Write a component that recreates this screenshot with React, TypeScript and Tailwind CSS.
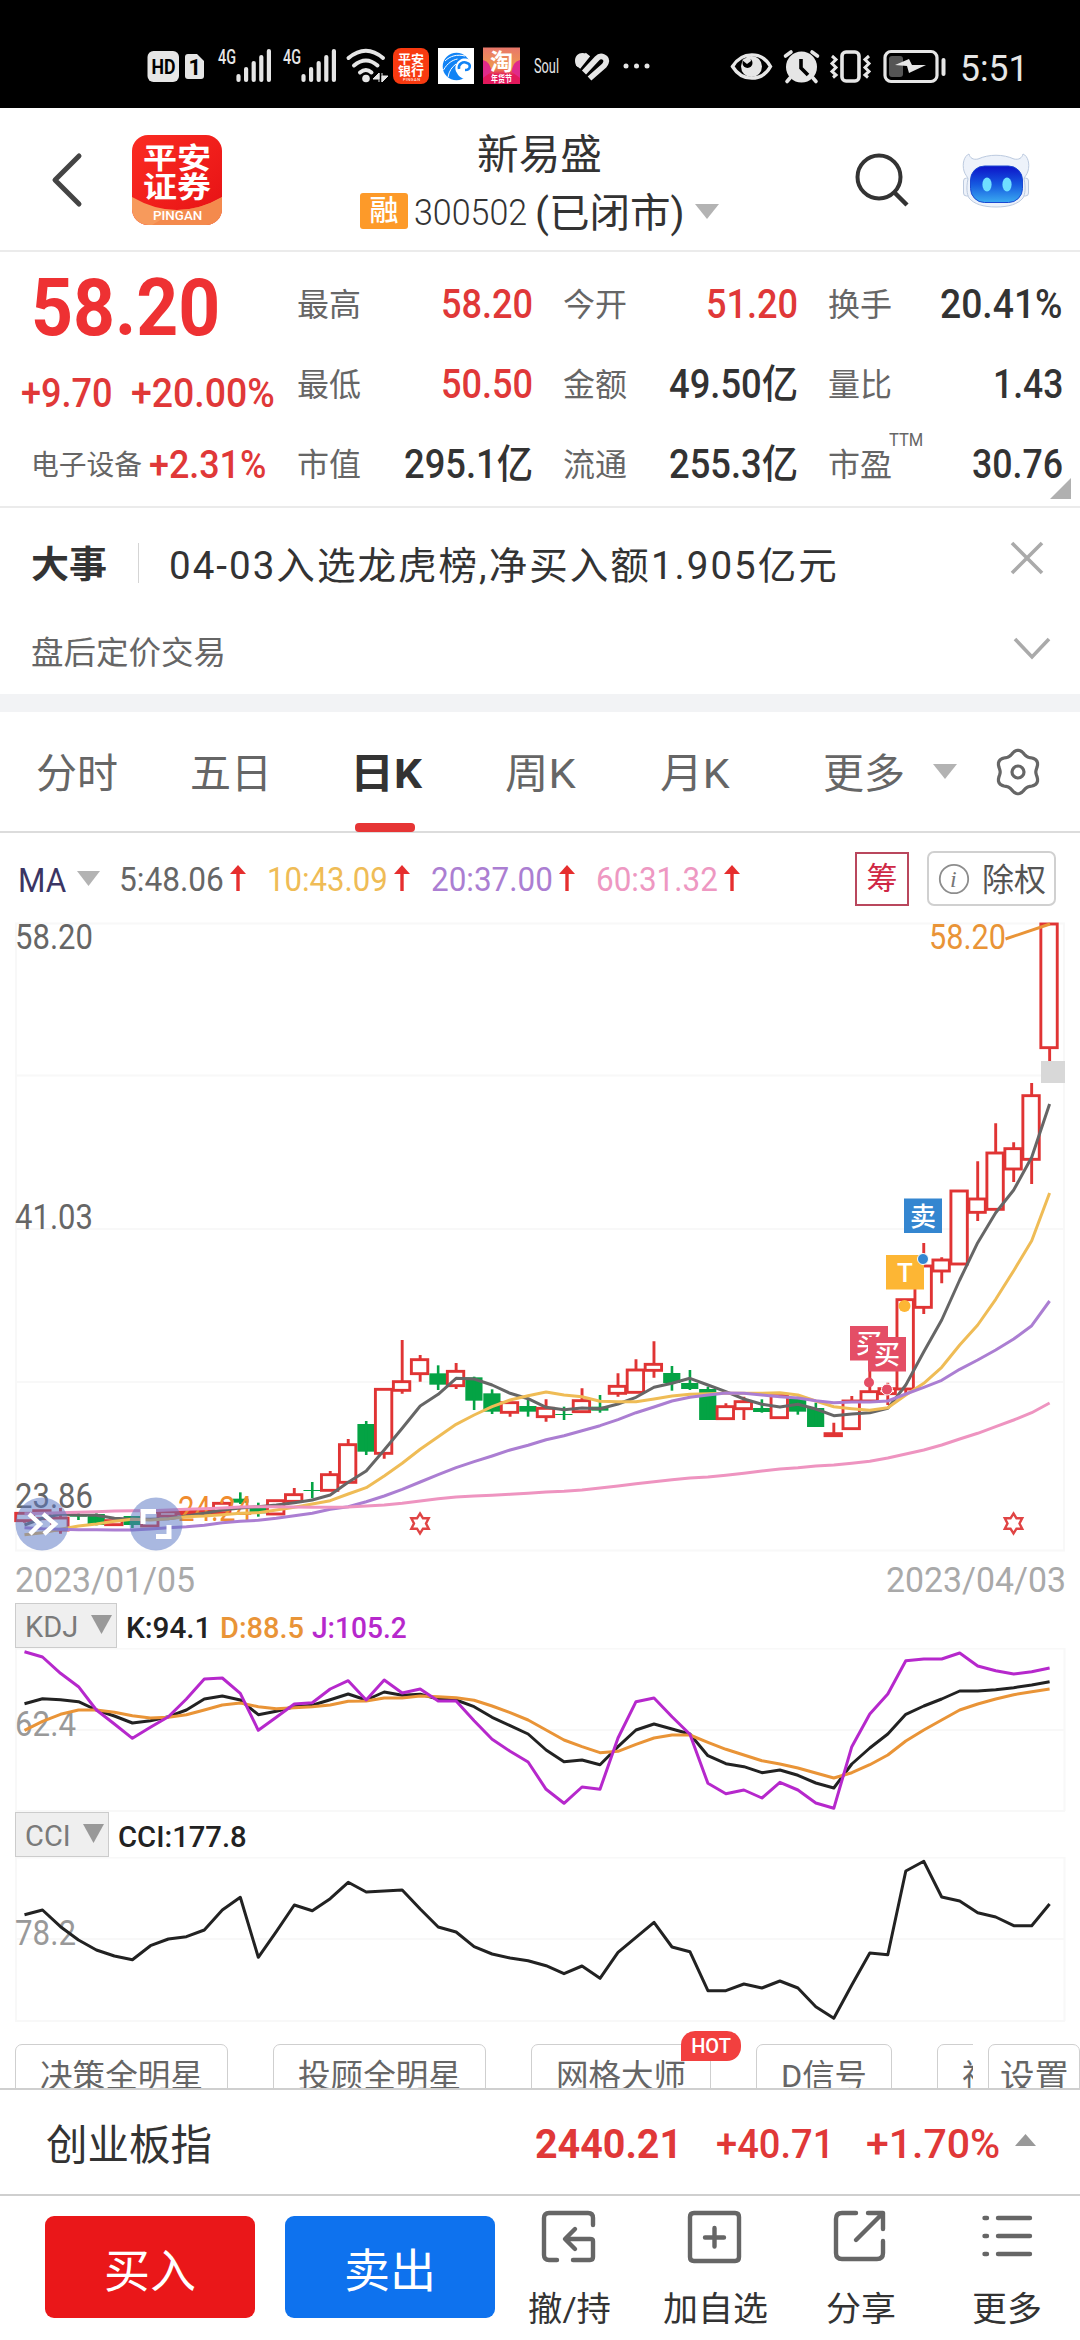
import { useLayoutEffect, useRef, useState, type ReactNode } from "react";

/** Single line of text condensed or stretched to the width of its box. */
function Fit({ className, children }: { className: string; children: ReactNode }) {
  const box = useRef<HTMLSpanElement>(null);
  const text = useRef<HTMLSpanElement>(null);
  const [scale, setScale] = useState(1);
  useLayoutEffect(() => {
    if (box.current && text.current && text.current.offsetWidth > 0) {
      setScale(box.current.offsetWidth / text.current.offsetWidth);
    }
  }, [children]);
  return (
    <span ref={box} className={`block shrink-0 leading-none whitespace-nowrap ${className}`}>
      <span ref={text} className="inline-block origin-left" style={{ transform: `scaleX(${scale})` }}>
        {children}
      </span>
    </span>
  );
}

function Down({ className }: { className: string }) {
  return (
    <svg viewBox="0 0 24 16" preserveAspectRatio="none" className={`shrink-0 ${className}`}>
      <path d="M0 0H24L12 16Z" fill="currentColor" />
    </svg>
  );
}

function Signal() {
  const tops = [75, 68, 62, 56, 50];
  return (
    <svg width="65" height="108" viewBox="215 0 65 108" className="shrink-0">
      <text x="218" y="64" fontSize="20" fontWeight="500" textLength="18" lengthAdjust="spacingAndGlyphs" fill="#e6e6e6">
        4G
      </text>
      {tops.map((t, i) => (
        <path key={t} d={`M${238.5 + i * 7.6} ${t + 1}V80`} stroke="#e6e6e6" strokeWidth="4.2" strokeLinecap="round" />
      ))}
    </svg>
  );
}

function StatusBar() {
  return (
    <div className="flex h-[108px] bg-black">
      <svg width="75" height="108" viewBox="140 0 75 108" className="ml-[140px] shrink-0">
        <rect x="147.5" y="51" width="31.5" height="31" rx="6" fill="#e6e6e6" />
        <text x="151.5" y="73.500" fontSize="20" fontWeight="700" textLength="24" lengthAdjust="spacingAndGlyphs">HD</text>
        <path d="M188 54h9l7 7v15a3 3 0 0 1-3 3h-13a3 3 0 0 1-3-3v-19a3 3 0 0 1 3-3z" fill="#e6e6e6" />
        <text x="188.500" y="75" fontSize="22" fontWeight="700">1</text>
      </svg>
      <Signal />
      <Signal />
      <svg width="46" height="108" viewBox="345 0 46 108" className="shrink-0">
        <g fill="none" stroke="#e6e6e6" strokeWidth="4" strokeLinecap="round">
          <path d="M348.500 58Q366 43.500 383 58" />
          <path d="M354 65.500Q366 55.500 377.500 65.500" />
          <path d="M360 72.500Q366 67.500 371.500 72.500" />
        </g>
        <circle cx="366" cy="78.500" r="3.800" fill="#e6e6e6" />
        <path d="M379 73v9M373 79l6-6v6zM382 82v-9M388 76h-6v6z" fill="#e6e6e6" stroke="#e6e6e6" strokeWidth="1" />
      </svg>
      <svg width="43" height="108" viewBox="391 0 43 108" className="shrink-0">
        <rect x="393" y="48" width="36" height="36" rx="8" fill="#f83a10" />
        <g fill="#fff" fontWeight="700" fontSize="12.500">
          <text x="398" y="63.500" textLength="26" lengthAdjust="spacingAndGlyphs">平安</text>
          <text x="398" y="75.500" textLength="26" lengthAdjust="spacingAndGlyphs">银行</text>
          <text x="403" y="81" fontSize="4" fontWeight="400" textLength="17">PINGAN</text>
        </g>
      </svg>
      <svg width="45" height="108" viewBox="434 0 45 108" className="shrink-0">
        <rect x="438" y="48" width="36" height="36" fill="#fff" />
        <circle cx="456.500" cy="66.500" r="13.800" fill="#1183f5" />
        <path d="M473 64c-2-5-9-7-13-4-5 3-6 9-3 13 2 4 6 6 9 6l7-6z" fill="#fff" />
        <path d="M459 69c-1-5 4-8 8-6 4 1 4 7-2 7" fill="none" stroke="#1183f5" strokeWidth="2.600" />
        <path d="M445 61c5-5 12-7 20-5M443.500 70c4-7 9-10 14-11M448 77c1-6 4-10 8-13" fill="none" stroke="#fff" strokeWidth="1" />
      </svg>
      <svg width="46" height="108" viewBox="479 0 46 108" className="shrink-0">
        <defs>
          <linearGradient id="tao" x1="0" y1="0" x2="0" y2="1">
            <stop offset="0" stopColor="#e9776b" />
            <stop offset=".55" stopColor="#ee9a4d" />
            <stop offset=".75" stopColor="#e3185c" />
          </linearGradient>
        </defs>
        <rect x="483" y="47.500" width="37" height="36.500" fill="url(#tao)" />
        <path d="M483 60q8 2 8 12l-8 6zM520 60q-8 2-8 12l8 6z" fill="#e02a8a" />
        <text x="490" y="69.500" fontSize="23" fontWeight="700" fill="#fff">淘</text>
        <text x="491" y="82" fontSize="9" fontWeight="700" fill="#fff" textLength="21" lengthAdjust="spacingAndGlyphs">年货节</text>
      </svg>
      <svg width="45" height="108" viewBox="525 0 45 108" className="shrink-0">
        <text x="534" y="73" fontSize="19.500" textLength="25" lengthAdjust="spacingAndGlyphs" fill="#e6e6e6">Soul</text>
      </svg>
      <svg width="45" height="108" viewBox="570 0 45 108" className="shrink-0">
        <g fill="none" stroke="#e6e6e6" strokeWidth="5.600">
          <path d="M578 67L588 54.500M584 72.500L597 58.500c4-4.500 10.500-1 9 4-.4 1.500-1 2.200-2 3.300L589.500 78.500" />
        </g>
        <path d="M575 61c0-7 6-9.500 11.500-7l-9 13c-1.500-1.500-2.500-3.500-2.500-6z" fill="#e6e6e6" />
      </svg>
      <svg width="45" height="108" viewBox="615 0 45 108" className="shrink-0">
        {[626, 636.5, 647].map((x) => (
          <circle key={x} cx={x} cy="66" r="2.500" fill="#e6e6e6" />
        ))}
      </svg>
      <svg width="52" height="108" viewBox="727 0 52 108" className="ml-[67px] shrink-0">
        <path d="M732.500 66.500C742 51 762 51 770.500 66.500C762 82 742 82 732.500 66.500Z" fill="none" stroke="#e6e6e6" strokeWidth="3.400" />
        <circle cx="751.500" cy="66.500" r="10.500" fill="#e6e6e6" />
        <circle cx="747.500" cy="63" r="5" fill="#000" />
        <path d="M742 60l8-4 1 5-4 3z" fill="#e6e6e6" />
      </svg>
      <svg width="46" height="108" viewBox="779 0 46 108" className="shrink-0">
        <circle cx="801.500" cy="67" r="15.500" fill="#e6e6e6" />
        <path d="M801 59v9l7 7" fill="none" stroke="#000" strokeWidth="3.600" />
        <path d="M785.500 56l5.500-4M817.500 56l-5.500-4M790 78l-3 3.500M813 78l3 3.500" stroke="#e6e6e6" strokeWidth="3.600" strokeLinecap="round" />
      </svg>
      <svg width="51" height="108" viewBox="825 0 51 108" className="shrink-0">
        <rect x="842" y="52" width="17" height="29" rx="4" fill="none" stroke="#e6e6e6" strokeWidth="3.600" />
        <path d="M832 56l4 3.500-4 4 4 4-4 4 4 3.500-3 2.500M869 56l-4 3.500 4 4-4 4 4 4-4 3.500 3 2.500" fill="none" stroke="#e6e6e6" strokeWidth="3" />
      </svg>
      <svg width="76" height="108" viewBox="876 0 76 108" className="shrink-0">
        <rect x="885" y="51.500" width="52" height="30" rx="6" fill="none" stroke="#e6e6e6" strokeWidth="3.200" />
        <rect x="889" y="56" width="14" height="21" rx="3" fill="#555" />
        <path d="M895 65l14-6 3 6h14l-17 8-2-7z" fill="#e6e6e6" />
        <path d="M943.500 60v14" stroke="#e6e6e6" strokeWidth="4" strokeLinecap="round" />
      </svg>
      <Fit className="mt-[50px] ml-[8px] w-[68px] text-[37px] text-[#e6e6e6]">5:51</Fit>
    </div>
  );
}

function Header() {
  return (
    <header className="flex h-[144px] border-b-2 border-[#ebebeb] bg-white">
      <svg width="36" height="60" viewBox="0 0 36 60" className="mt-[42px] ml-[49px] shrink-0">
        <path d="M30 6L6 30l24 24" fill="none" stroke="#444" strokeWidth="5" strokeLinecap="round" strokeLinejoin="round" />
      </svg>
      <div className="relative mt-[27px] ml-[47px] flex h-[90px] w-[90px] shrink-0 flex-col items-center overflow-hidden rounded-[16px] bg-gradient-to-br from-[#fb2b22] to-[#e60e14] font-bold text-white">
        <svg viewBox="0 0 90 90" className="absolute inset-0">
          <path d="M0 62Q45 88 90 62V90H0Z" fill="#f79a5c" />
          <path d="M45 75Q72 74 90 62V90H20Z" fill="#f27d41" opacity=".55" />
        </svg>
        <Fit className="relative mt-[10px] w-[68px] text-[29px]">平安</Fit>
        <Fit className="relative w-[68px] text-[29px]">证券</Fit>
        <Fit className="relative mt-[7px] w-[49px] text-[12px] font-medium">PINGAN</Fit>
      </div>
      <div className="ml-[138px] flex w-[360px] shrink-0 flex-col">
        <Fit className="mt-[27px] ml-[117px] w-[125px] text-[41px] text-[#333]">新易盛</Fit>
        <div className="mt-[14px] flex h-[42px] items-center">
          <span className="flex h-[36px] w-[48px] items-center justify-center rounded-[3px] bg-[#fd9a29] text-[29px] leading-none font-medium text-white">融</span>
          <Fit className="mt-[2px] ml-[6px] w-[113px] text-[37px] font-light text-[#333]">300502</Fit>
          <Fit className="mt-[5px] ml-[8px] w-[150px] text-[40px] text-[#333]">(已闭市)</Fit>
          <Down className="ml-[10px] h-[15px] w-[24px] text-[#b3b3b3]" />
        </div>
      </div>
      <svg width="60" height="60" viewBox="850 148 60 60" className="mt-[40px] ml-[130px] shrink-0">
        <circle cx="879" cy="177" r="21.500" fill="none" stroke="#333" strokeWidth="4" />
        <path d="M895 193l12 12" stroke="#333" strokeWidth="4.500" />
      </svg>
      <svg width="70" height="60" viewBox="960 150 70 60" className="mt-[42px] ml-[51px] shrink-0">
        <defs>
          <linearGradient id="visor" x1="0" y1="0" x2="0" y2="1">
            <stop offset="0" stopColor="#0d12c8" />
            <stop offset=".5" stopColor="#1558e0" />
            <stop offset="1" stopColor="#3aaaf0" />
          </linearGradient>
        </defs>
        <g fill="#edf2fa" stroke="#bccadf" strokeWidth="1">
          <rect x="962.500" y="178" width="10" height="18" rx="3" />
          <rect x="1017.500" y="178" width="10" height="18" rx="3" />
          <path d="M968 154c-5 2-7 10-5 17 1 4 4 6 4 8-2 9-1 15 1 19 5 6 14 9 27 9s22-3 27-9c2-4 3-10 1-19 0-2 3-4 4-8 2-7 0-15-5-17-1 4-4 6-9 5-11-5-25-5-36 0-5 1-8-1-9-5z" />
        </g>
        <rect x="969.500" y="166" width="52" height="36.500" rx="14" fill="url(#visor)" stroke="#1a49d2" />
        <ellipse cx="986" cy="184.500" rx="4.600" ry="7" fill="#6fe0ff" />
        <ellipse cx="1006" cy="184.500" rx="4.600" ry="7" fill="#6fe0ff" />
      </svg>
    </header>
  );
}

const RED = "text-[#e03838]";
const INK = "text-[#333]";

function Stat({ label, value, width, tone, sup }: { label: string; value: string; width: string; tone: string; sup?: string }) {
  return (
    <div className="relative flex h-[80px] items-center justify-between">
      <Fit className="w-[64px] text-[32px] text-[#666]">{label}</Fit>
      {sup && <Fit className="absolute top-[6px] left-[61px] w-[34px] text-[18px] text-[#666]">{sup}</Fit>}
      <Fit className={`${width} ${tone} text-[40px] font-medium`}>{value}</Fit>
    </div>
  );
}

function Quote() {
  return (
    <section className="relative flex h-[256px] border-b-2 border-[#ebebeb] bg-white">
      <div className="w-[297px] shrink-0">
        <Fit className="mt-[17px] ml-[31px] w-[189px] text-[79px] font-bold text-[#ee3133]">58.20</Fit>
        <div className={`mt-[26px] flex ${RED}`}>
          <Fit className="ml-[21px] w-[92px] text-[40px] font-medium">+9.70</Fit>
          <Fit className="ml-[18px] w-[144px] text-[40px] font-medium">+20.00%</Fit>
        </div>
        <div className="mt-[32px] flex items-center">
          <Fit className="mt-[2px] ml-[31px] w-[111px] text-[28px] text-[#666]">电子设备</Fit>
          <Fit className={`ml-[7px] w-[117px] text-[38px] font-medium ${RED}`}>+2.31%</Fit>
        </div>
      </div>
      <div className="grid h-[240px] w-[767px] shrink-0 grid-cols-[236px_235px_235px] gap-x-[30px] pt-[13px]">
        <Stat label="最高" value="58.20" width="w-[92px]" tone={RED} />
        <Stat label="今开" value="51.20" width="w-[92px]" tone={RED} />
        <Stat label="换手" value="20.41%" width="w-[123px]" tone={INK} />
        <Stat label="最低" value="50.50" width="w-[92px]" tone={RED} />
        <Stat label="金额" value="49.50亿" width="w-[129px]" tone={INK} />
        <Stat label="量比" value="1.43" width="w-[70px]" tone={INK} />
        <Stat label="市值" value="295.1亿" width="w-[129px]" tone={INK} />
        <Stat label="流通" value="255.3亿" width="w-[129px]" tone={INK} />
        <Stat label="市盈" value="30.76" width="w-[91px]" tone={INK} sup="TTM" />
      </div>
      <svg width="21" height="21" viewBox="0 0 21 21" className="absolute right-[9px] bottom-[7px]">
        <path d="M21 0V21H0Z" fill="#b0b0b0" />
      </svg>
    </section>
  );
}

function News() {
  return (
    <section className="h-[186px] bg-white">
      <div className="flex h-[110px] items-center">
        <Fit className="mt-[5px] ml-[31px] w-[76px] text-[37px] font-bold text-[#333]">大事</Fit>
        <span className="ml-[31px] h-[40px] w-px bg-[#d5d5d5]" />
        <Fit className="mt-[5px] ml-[30px] w-[670px] text-[38px] tracking-[2px] text-[#333]">04-03入选龙虎榜,净买入额1.905亿元</Fit>
        <svg width="36" height="36" viewBox="0 0 36 36" className="mb-[10px] ml-[170px]">
          <path d="M3 3L33 33M33 3L3 33" stroke="#aaa" strokeWidth="3.600" />
        </svg>
      </div>
      <div className="flex h-[70px] items-center">
        <Fit className="ml-[31px] w-[195px] text-[32px] text-[#666]">盘后定价交易</Fit>
        <svg width="40" height="26" viewBox="0 0 40 26" className="mb-[8px] ml-[786px]">
          <path d="M3 3L20 21L37 3" fill="none" stroke="#aaa" strokeWidth="3.600" />
        </svg>
      </div>
    </section>
  );
}

/** Six-lobed outline for the settings gear, point up. */
const gear = Array.from({ length: 72 }, (_, i) => {
  const a = (i * Math.PI) / 36;
  const r = 19.8 + 2 * Math.cos(6 * a);
  return `${(r * Math.sin(a)).toFixed(2)},${(-r * Math.cos(a)).toFixed(2)}`;
}).join(" ");

function Periods() {
  return (
    <nav className="relative flex h-[121px] items-center border-b-2 border-[#dcdcdc] bg-white text-[41px] text-[#666]">
      <Fit className="mt-[6px] ml-[36px] w-[82px]">分时</Fit>
      <Fit className="mt-[6px] ml-[72px] w-[82px]">五日</Fit>
      <Fit className="mt-[6px] ml-[78px] w-[72px] font-bold text-[#333]">日K</Fit>
      <Fit className="mt-[6px] ml-[83px] w-[71px]">周K</Fit>
      <Fit className="mt-[6px] ml-[84px] w-[70px]">月K</Fit>
      <Fit className="mt-[6px] ml-[93px] w-[82px]">更多</Fit>
      <Down className="ml-[28px] h-[15px] w-[24px] text-[#b3b3b3]" />
      <svg width="48" height="48" viewBox="-24 -24 48 48" className="ml-[37px] shrink-0">
        <polygon points={gear} fill="none" stroke="#666" strokeWidth="3.200" strokeLinejoin="round" />
        <circle r="6" fill="none" stroke="#666" strokeWidth="3.200" />
      </svg>
      <span className="absolute bottom-[-1px] left-[355px] h-[9px] w-[60px] rounded-[4px] bg-[#e63535]" />
    </nav>
  );
}

function Average({ text, color, width, gap }: { text: string; color: string; width: string; gap: string }) {
  return (
    <div className={`flex items-center ${gap}`}>
      <Fit className={`text-[34px] ${width} ${color}`}>{text}</Fit>
      <svg width="16" height="26" viewBox="0 0 16 26" className="mb-[2px] ml-[6px]">
        <path d="M8 26V6" stroke="#e62e2e" strokeWidth="3.400" />
        <path d="M0 9L8 0L16 9Z" fill="#e62e2e" />
      </svg>
    </div>
  );
}

function Averages() {
  return (
    <div className="flex h-[87px] items-center bg-white pt-[4px]">
      <Fit className="mt-[2px] ml-[18px] w-[48px] text-[34px] text-[#3b3564]">MA</Fit>
      <Down className="ml-[11px] h-[15px] w-[23px] text-[#b3b3b3]" />
      <Average text="5:48.06" color="text-[#666]" width="w-[105px]" gap="ml-[19px]" />
      <Average text="10:43.09" color="text-[#efbc56]" width="w-[121px]" gap="ml-[21px]" />
      <Average text="20:37.00" color="text-[#ab7ed2]" width="w-[122px]" gap="ml-[21px]" />
      <Average text="60:31.32" color="text-[#ee98c2]" width="w-[122px]" gap="ml-[21px]" />
      <div className="ml-[115px] flex h-[54px] w-[54px] items-center justify-center border-2 border-[#b9475d] text-[31px] leading-none text-[#cf2745]">筹</div>
      <div className="ml-[18px] flex h-[55px] w-[129px] items-center rounded-[7px] border-2 border-[#d0d0d0]">
        <svg width="32" height="32" viewBox="0 0 32 32" className="ml-[9px]">
          <circle cx="16" cy="16" r="14.200" fill="none" stroke="#8d8d8d" strokeWidth="1.800" />
          <text x="12" y="24" fontSize="24" fontStyle="italic" fontFamily="Liberation Serif, serif" fill="#777">i</text>
        </svg>
        <Fit className="mt-[2px] ml-[12px] w-[64px] text-[32px] text-[#555]">除权</Fit>
      </div>
    </div>
  );
}

/* Chart data is stored in thirds of a pixel. */
const xAt = (i: number) => 24.5 + 17.985 * i;
const line = (values: number[]) => values.map((v, i) => `${xAt(i).toFixed(1)},${(v / 3).toFixed(1)}`).join(" ");

type Candle = ["r" | "g", number, number, number, number];

/* colour, body top, body bottom, high, low */
const candles: Candle[] = [
  ["r", 1840, 1862, 1838, 1868], ["r", 1832, 1856, 1830, 1860], ["r", 1854, 1890, 1824, 1901], ["g", 1842, 1850, 1838, 1860],
  ["g", 1842, 1875, 1840, 1876], ["r", 1862, 1874, 1860, 1878], ["g", 1848, 1875, 1848, 1884], ["r", 1836, 1878, 1834, 1880],
  ["r", 1836, 1848, 1832, 1852], ["r", 1834, 1842, 1828, 1846], ["r", 1832, 1840, 1828, 1842], ["r", 1810, 1838, 1804, 1840],
  ["g", 1796, 1808, 1777, 1812], ["g", 1818, 1840, 1808, 1850], ["r", 1802, 1842, 1800, 1844], ["r", 1784, 1804, 1764, 1806],
  ["g", 1770, 1773, 1746, 1795], ["r", 1724, 1771, 1713, 1773], ["r", 1634, 1747, 1617, 1750], ["g", 1572, 1655, 1563, 1665],
  ["r", 1468, 1660, 1466, 1676], ["r", 1445, 1471, 1320, 1481], ["r", 1379, 1421, 1365, 1445], ["g", 1420, 1454, 1396, 1470],
  ["r", 1414, 1457, 1389, 1467], ["g", 1432, 1502, 1430, 1530], ["g", 1480, 1535, 1468, 1542], ["r", 1508, 1537, 1506, 1550],
  ["g", 1518, 1535, 1500, 1550], ["r", 1525, 1550, 1498, 1565], ["g", 1542, 1545, 1520, 1560], ["r", 1502, 1535, 1465, 1537],
  ["g", 1520, 1532, 1485, 1538], ["r", 1459, 1480, 1420, 1490], ["r", 1410, 1477, 1378, 1479], ["r", 1393, 1411, 1324, 1433],
  ["g", 1419, 1449, 1398, 1472], ["g", 1449, 1467, 1410, 1470], ["g", 1467, 1560, 1460, 1560], ["r", 1520, 1556, 1510, 1558],
  ["r", 1505, 1526, 1490, 1560], ["g", 1524, 1536, 1498, 1538], ["r", 1487, 1553, 1485, 1555], ["g", 1497, 1535, 1490, 1544],
  ["g", 1524, 1581, 1508, 1581], ["r", 1601, 1607, 1568, 1609], ["r", 1503, 1586, 1488, 1588], ["r", 1475, 1503, 1400, 1505],
  ["r", 1466, 1481, 1448, 1515], ["r", 1199, 1467, 1197, 1480], ["r", 1098, 1222, 1029, 1242], ["r", 1080, 1113, 1072, 1150],
  ["r", 873, 1092, 870, 1094], ["r", 897, 937, 784, 963], ["r", 759, 928, 670, 930], ["r", 746, 807, 727, 846],
  ["r", 587, 778, 549, 852], ["r", 72, 443, 70, 483],
];

const ma5 = [1875, 1855, 1842, 1845, 1846, 1855, 1858, 1858, 1856, 1848, 1840, 1830, 1824, 1820, 1815, 1808, 1800, 1785, 1747, 1713, 1650, 1585, 1518, 1483, 1435, 1437, 1455, 1480, 1496, 1522, 1529, 1524, 1526, 1512, 1492, 1462, 1450, 1435, 1455, 1475, 1497, 1513, 1521, 1513, 1527, 1547, 1542, 1538, 1525, 1455, 1355, 1260, 1140, 1028, 938, 870, 772, 612];
const ma10 = [1904, 1898, 1888, 1878, 1872, 1864, 1858, 1860, 1856, 1850, 1848, 1844, 1840, 1838, 1830, 1822, 1812, 1802, 1782, 1763, 1728, 1690, 1648, 1610, 1573, 1545, 1520, 1500, 1487, 1476, 1485, 1490, 1504, 1505, 1505, 1497, 1488, 1483, 1481, 1480, 1480, 1480, 1478, 1485, 1503, 1520, 1526, 1531, 1523, 1485, 1450, 1402, 1335, 1275, 1198, 1112, 1022, 879];
const ma20 = [1883, 1886, 1888, 1889, 1889, 1890, 1890, 1887, 1883, 1880, 1876, 1868, 1864, 1861, 1855, 1847, 1840, 1828, 1820, 1805, 1788, 1768, 1746, 1724, 1703, 1685, 1668, 1650, 1636, 1619, 1607, 1592, 1577, 1559, 1538, 1521, 1503, 1492, 1485, 1479, 1480, 1485, 1490, 1494, 1502, 1508, 1506, 1506, 1503, 1482, 1462, 1441, 1408, 1380, 1350, 1317, 1277, 1203];
const ma60 = [1841, 1840, 1838, 1837, 1835, 1833, 1832, 1832, 1830, 1828, 1826, 1824, 1821, 1820, 1820, 1821, 1822, 1822, 1821, 1818, 1815, 1810, 1803, 1796, 1791, 1788, 1786, 1783, 1780, 1776, 1774, 1770, 1764, 1758, 1751, 1745, 1739, 1734, 1731, 1726, 1720, 1713, 1707, 1703, 1698, 1695, 1690, 1684, 1674, 1662, 1650, 1635, 1617, 1600, 1580, 1560, 1538, 1509];

function Label({ x, y, w, fill, children }: { x: number; y: number; w: number; fill: string; children: string }) {
  return (
    <text x={x} y={y} fontSize="35" textLength={w} lengthAdjust="spacingAndGlyphs" fill={fill}>
      {children}
    </text>
  );
}

function Tag({ x, y, fill, children }: { x: number; y: number; fill: string; children: string }) {
  return (
    <g>
      <rect x={x} y={y} width="38" height="34.500" fill={fill} />
      <text x={x + 19} y={y + 27} fontSize="26" fontWeight="500" textAnchor="middle" fill="#fff">
        {children}
      </text>
    </g>
  );
}

function KLine() {
  const star = "M0-10L3-5.200H8.700L6 0L8.700 5.200H3L0 10L-3 5.200H-8.700L-6 0L-8.700-5.200H-3Z";
  return (
    <svg width="1080" height="683" viewBox="0 20 1080 683" className="block">
      <g stroke="#f8f8f8" strokeWidth="2">
        <path d="M15 23.500H1065M15 175.500H1065M15 329H1065M15 482H1065M15 650.500H1065M16 23V650M1064 23V650" />
      </g>
      <Label x={15} y={49} w={78} fill="#666">58.20</Label>
      <Label x={15} y={329} w={78} fill="#666">41.03</Label>
      <Label x={15} y={608} w={78} fill="#666">23.86</Label>
      {candles.map(([c, top, bottom, high, low], i) => {
        const x = xAt(i);
        return c === "g" ? (
          <g key={i} fill="#04a344">
            <rect x={x - 8.8} y={top / 3} width="17.200" height={(bottom - top) / 3} />
            <rect x={x - 1.3} y={high / 3} width="2.600" height={(low - high) / 3} />
          </g>
        ) : (
          <g key={i} stroke="#e03434" strokeWidth="2.900" fill="none">
            <path d={`M${x} ${high / 3}V${top / 3}M${x} ${bottom / 3}V${low / 3}`} />
            <rect x={x - 8.8} y={top / 3} width="16.400" height={(bottom - top) / 3} fill="#fff" />
          </g>
        );
      })}
      <Label x={178} y={621} w={74} fill="#f08c2e">24.24</Label>
      <Label x={929} y={49} w={77} fill="#e99437">58.20</Label>
      <path d="M1005.500 39L1050 24" stroke="#e99437" strokeWidth="3" />
      <rect x="1041" y="161" width="24" height="22" fill="#d8d8d8" />
      <g fill="none" strokeWidth="3" strokeLinejoin="round">
        <polyline points={line(ma5)} stroke="#666" />
        <polyline points={line(ma10)} stroke="#efbc56" />
        <polyline points={line(ma20)} stroke="#ab7ed2" />
        <polyline points={line(ma60)} stroke="#ee94c0" />
      </g>
      <Tag x={904} y={298.5} fill="#3486d0">卖</Tag>
      <Tag x={886} y={355} fill="#fdb634">T</Tag>
      <Tag x={850} y={426} fill="#e44e66">买</Tag>
      <Tag x={868} y={437} fill="#e44e66">买</Tag>
      <circle cx="923" cy="359" r="5.500" fill="#3486d0" stroke="#fff" />
      <circle cx="904.500" cy="406" r="6" fill="#fdb634" />
      <circle cx="869" cy="482.500" r="5" fill="#e44e66" />
      <circle cx="887" cy="489.500" r="5.500" fill="#e44e66" stroke="#fff" />
      <g fill="none" stroke="#e04444" strokeWidth="2.400">
        <path d={star} transform="translate(420 623.500)" />
        <path d={star} transform="translate(1013.500 623.500)" />
      </g>
      <g fill="#5b77c4" fillOpacity=".52">
        <circle cx="42" cy="624" r="26.500" />
        <circle cx="156" cy="624" r="26.500" />
      </g>
      <path d="M29 614L40 624L30 634M43 614L55 624L44 634" fill="none" stroke="#fff" strokeWidth="4.500" />
      <path d="M143 624V611.500H156M169 625V636.500H156" fill="none" stroke="#fff" strokeWidth="5" />
      <Label x={15} y={692} w={180} fill="#a9a9a9">2023/01/05</Label>
      <Label x={886} y={692} w={180} fill="#a9a9a9">2023/04/03</Label>
    </svg>
  );
}

const kdjJ = [185, 201, 250, 290, 360, 402, 445, 412, 380, 327, 267, 264, 310, 421, 382, 342, 338, 297, 272, 330, 270, 309, 297, 333, 333, 392, 448, 484, 516, 598, 640, 591, 598, 444, 335, 324, 380, 433, 580, 611, 600, 624, 577, 600, 639, 655, 470, 372, 312, 212, 207, 207, 189, 228, 242, 252, 245, 234];
const kdjK = [341, 326, 329, 335, 360, 378, 399, 392, 380, 360, 327, 318, 330, 374, 364, 350, 346, 329, 312, 330, 306, 316, 313, 327, 330, 350, 382, 407, 432, 480, 515, 510, 524, 470, 420, 402, 417, 432, 497, 521, 530, 548, 540, 556, 579, 594, 522, 474, 432, 373, 348, 327, 303, 303, 299, 293, 285, 275];
const kdjD = [421, 394, 373, 360, 360, 367, 377, 384, 382, 374, 360, 345, 339, 350, 356, 353, 350, 345, 334, 333, 324, 324, 318, 320, 323, 331, 348, 368, 390, 420, 450, 470, 488, 484, 463, 444, 435, 435, 457, 478, 495, 512, 522, 534, 549, 564, 548, 524, 495, 453, 420, 390, 360, 342, 327, 314, 305, 297];
const cci = [974, 960, 1010, 1050, 1080, 1098, 1109, 1067, 1047, 1040, 1020, 960, 922, 1102, 1025, 945, 962, 926, 877, 906, 903, 900, 957, 1011, 1026, 1070, 1092, 1104, 1112, 1127, 1151, 1128, 1165, 1087, 1042, 997, 1071, 1085, 1202, 1202, 1182, 1194, 1173, 1194, 1250, 1285, 1185, 1089, 1094, 843, 814, 921, 933, 968, 981, 1007, 1007, 942];

function Indicators() {
  return (
    <>
      <div className="flex h-[45px] items-center text-[29px] font-medium">
        <div className="ml-[15px] flex h-[45px] w-[102px] items-center border border-[#ccc] bg-[#efefef]">
          <Fit className="mt-[4px] ml-[9px] w-[53px] font-normal text-[#7a7a7a]">KDJ</Fit>
          <Down className="mb-[3px] ml-[13px] h-[19px] w-[21px] text-[#999]" />
        </div>
        <Fit className="mt-[6px] ml-[9px] w-[85px] text-[#222]">K:94.1</Fit>
        <Fit className="mt-[6px] ml-[9px] w-[84px] text-[#e99437]">D:88.5</Fit>
        <Fit className="mt-[6px] ml-[8px] w-[95px] text-[#b628cc]">J:105.2</Fit>
      </div>
      <svg width="1080" height="164" viewBox="0 58 1080 164" className="block">
        <path d="M15 58.500H1065M15 140H1065M15 221H1065M16 58V221M1064.500 58V221" stroke="#f8f8f8" strokeWidth="2" />
        <Label x={15} y={146} w={61} fill="#999">62.4</Label>
        <g fill="none" strokeWidth="3" strokeLinejoin="round">
          <polyline points={line(kdjK)} stroke="#222" />
          <polyline points={line(kdjD)} stroke="#e99437" />
          <polyline points={line(kdjJ)} stroke="#b628cc" />
        </g>
      </svg>
      <div className="flex h-[45px] items-center text-[29px] font-medium">
        <div className="ml-[15px] flex h-[45px] w-[94px] items-center border border-[#ccc] bg-[#efefef]">
          <Fit className="mt-[4px] ml-[9px] w-[46px] font-normal text-[#7a7a7a]">CCI</Fit>
          <Down className="mb-[3px] ml-[12px] h-[19px] w-[21px] text-[#999]" />
        </div>
        <Fit className="mt-[6px] ml-[9px] w-[129px] text-[#222]">CCI:177.8</Fit>
      </div>
      <svg width="1080" height="169" viewBox="0 267 1080 169" className="block">
        <path d="M15 267.500H1065M15 349H1065M15 431H1065M16 267V431M1064.500 267V431" stroke="#f8f8f8" strokeWidth="2" />
        <Label x={15} y={354.5} w={61} fill="#999">78.2</Label>
        <polyline points={line(cci)} fill="none" stroke="#222" strokeWidth="3" strokeLinejoin="round" />
      </svg>
    </>
  );
}

function Chip({ box, children }: { box: string; children: ReactNode }) {
  return (
    <div className={`relative flex h-[64px] shrink-0 justify-center rounded-[7px] border-[1.500px] border-[#cfcfcf] bg-white pt-[15px] text-[32px] text-[#666] ${box}`}>
      {children}
    </div>
  );
}

function Chips() {
  return (
    <div className="flex h-[64px] overflow-hidden border-b-2 border-[#cfcfcf] bg-white pt-[18px]">
      <Chip box="ml-[15px] w-[213px]"><Fit className="w-[163px]">决策全明星</Fit></Chip>
      <Chip box="ml-[45px] w-[213px]"><Fit className="w-[163px]">投顾全明星</Fit></Chip>
      <Chip box="ml-[45px] w-[180px]">
        <Fit className="w-[130px]">网格大师</Fit>
        <span className="absolute top-[-14px] right-[-31px] flex h-[30px] w-[60px] items-center justify-center rounded-[14px] rounded-bl-none bg-[#f2403f] text-[20px] leading-none font-medium text-white">HOT</span>
      </Chip>
      <Chip box="ml-[45px] w-[136px]"><Fit className="w-[86px]">D信号</Fit></Chip>
      <div className="ml-[45px] w-[38px] overflow-hidden">
        <div className="h-[64px] w-[120px] rounded-[7px] border-[1.500px] border-[#cfcfcf] pt-[15px] pl-[24px] text-[32px] leading-none text-[#666]">神</div>
      </div>
      <Chip box="ml-[15px] w-[92px]"><Fit className="w-[69px] text-[34px]">设置</Fit></Chip>
    </div>
  );
}

function IndexBar() {
  return (
    <div className="flex h-[106px] items-center border-b-2 border-[#cfcfcf] bg-white text-[#e03838]">
      <Fit className="mt-[7px] ml-[46px] w-[166px] text-[42px] text-[#333]">创业板指</Fit>
      <Fit className="mt-[5px] ml-[323px] w-[147px] text-[41px] font-bold">2440.21</Fit>
      <Fit className="mt-[5px] ml-[34px] w-[118px] text-[41px] font-medium">+40.71</Fit>
      <Fit className="mt-[5px] ml-[32px] w-[134px] text-[41px] font-medium">+1.70%</Fit>
      <Down className="mb-[4px] ml-[15px] h-[12px] w-[21px] rotate-180 text-[#999]" />
    </div>
  );
}

function Action({ box, text, label, children }: { box: string; text: string; label: string; children: ReactNode }) {
  return (
    <div className={`flex shrink-0 flex-col items-center ${box}`}>
      <svg width="60" height="60" viewBox="0 0 60 60" className="mt-[11px]">
        <g fill="none" stroke="#666" strokeWidth="4.400" strokeLinecap="round" strokeLinejoin="round">{children}</g>
      </svg>
      <Fit className={`mt-[25px] text-[34px] text-[#333] ${text}`}>{label}</Fit>
    </div>
  );
}

function Actions() {
  return (
    <footer className="flex h-[143px] bg-white">
      <button className="mt-[20px] ml-[45px] flex h-[102px] w-[210px] items-center justify-center rounded-[9px] bg-[#ea1719] pt-[8px] text-[46px] leading-none text-white">买入</button>
      <button className="mt-[20px] ml-[30px] flex h-[102px] w-[210px] items-center justify-center rounded-[9px] bg-[#0e72ee] pt-[8px] text-[46px] leading-none text-white">卖出</button>
      <Action box="ml-[14px] w-[120px]" text="w-[83px]" label="撤/持">
        <path d="M18 53H10Q5 53 5 48V11Q5 6 10 6H49Q54 6 54 11V18M34 53H51Q54 53 54 50V34Q54 32 51 32H27M36 22L26 32L36 42" />
      </Action>
      <Action box="ml-[26px] w-[120px]" text="w-[105px]" label="加自选">
        <path d="M9 6H50Q54 6 54 10V50Q54 54 50 54H9Q5 54 5 50V10Q5 6 9 6ZM29.500 21V39.500M20 30.500H39" />
      </Action>
      <Action box="ml-[26px] w-[120px]" text="w-[70px]" label="分享">
        <path d="M25 6H11Q5 6 5 12V46Q5 52 11 52H46Q52 52 52 46V34M37 6H52V22M52 6L25 33" />
      </Action>
      <Action box="ml-[26px] w-[120px]" text="w-[70px]" label="更多">
        <path d="M7.500 11H10M21 11H53M7.500 29H10M21 29H53M7.500 47H10M21 47H53" />
      </Action>
    </footer>
  );
}

export default function App() {
  return (
    <main className="h-[2340px] w-[1080px] overflow-hidden bg-white font-[Roboto,'Noto_Sans_CJK_SC',sans-serif]">
      <StatusBar />
      <Header />
      <Quote />
      <News />
      <div className="h-[18px] bg-[#f2f3f5]" />
      <Periods />
      <Averages />
      <KLine />
      <Indicators />
      <Chips />
      <IndexBar />
      <Actions />
    </main>
  );
}
